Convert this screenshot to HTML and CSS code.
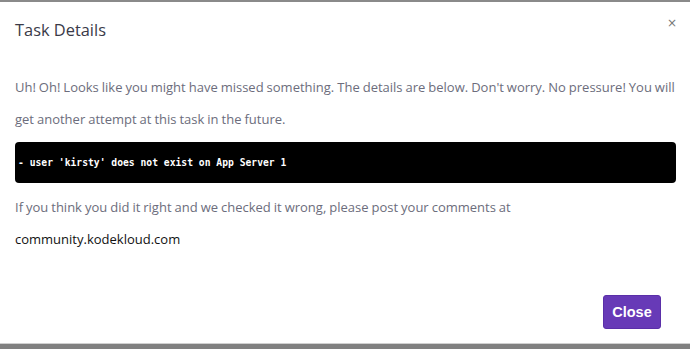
FILE: index.html
```html
<!DOCTYPE html>
<html lang="en">

<head>
    <meta charset="UTF-8">
    <meta name="viewport" content="width=device-width, initial-scale=1.0">
    <title>Task Details</title>
    <link rel="stylesheet" href="styles.css">
</head>

<body>
    <div class="backdrop">
        <div class="modal">
            <header class="modal-header">
                <h1 class="modal-title">Task Details</h1>
                <button class="modal-x" type="button">&times;</button>
            </header>
            <div class="modal-body">
                <p class="message">Uh! Oh! Looks like you might have missed something. The details are below. Don't worry. No pressure! You will get another attempt at this task in the future.</p>
                <div class="log-box">
                    <pre>- user 'kirsty' does not exist on App Server 1</pre>
                </div>
                <p class="message">If you think you did it right and we checked it wrong, please post your comments at</p>
                <p class="link">community.kodekloud.com</p>
            </div>
            <footer class="modal-footer">
                <button class="close-btn" type="button">Close</button>
            </footer>
        </div>
    </div>
</body>

</html>
```

FILE: styles.css
```css
* {
    margin: 0;
    padding: 0;
    box-sizing: border-box;
}

body {
    background-color: #808080;
    font-family: 'Open Sans', sans-serif;
}

.backdrop {
    width: 690px;
    height: 349px;
    border-top: 2px solid #8a8a8a;
}

.modal {
    height: 342px;
    background-color: #fff;
    border-bottom: 1px solid #d0d0d0;
    display: flex;
    flex-direction: column;
}

.modal-header {
    display: flex;
    justify-content: space-between;
    align-items: flex-start;
    padding: 17px 15px 0 15px;
}

.modal-title {
    font-size: 16.4px;
    font-weight: 400;
    color: #3a3a48;
    line-height: 22px;
}

.modal-x {
    border: none;
    background: none;
    font-family: 'DejaVu Sans', sans-serif;
    font-size: 12px;
    line-height: 12px;
    color: #777;
    margin-top: -2px;
    margin-right: -2px;
}

.modal-body {
    padding: 30px 6px 0 15px;
}

.message {
    font-size: 13px;
    line-height: 32px;
    word-spacing: -0.4px;
    color: #6c6d7c;
}

.log-box {
    background-color: #000;
    border-radius: 4px;
    height: 41px;
    width: 661px;
    margin: 7px 0 8px 0;
    padding: 0 3px;
    display: flex;
    align-items: center;
}

.log-box pre {
    font-family: 'DejaVu Sans Mono', monospace;
    font-size: 9.7px;
    font-weight: bold;
    color: #fff;
}

.link {
    font-size: 13px;
    line-height: 32px;
    color: #111;
}

.modal-footer {
    margin-top: auto;
    display: flex;
    justify-content: flex-end;
    padding: 0 29px 14px 0;
}

.close-btn {
    width: 58px;
    height: 34px;
    border: 1px solid #5a2fa8;
    border-radius: 3px;
    background-color: #673ab7;
    color: #fff;
    font-family: 'Liberation Sans', Arial, sans-serif;
    font-weight: bold;
    font-size: 14.5px;
}
```
